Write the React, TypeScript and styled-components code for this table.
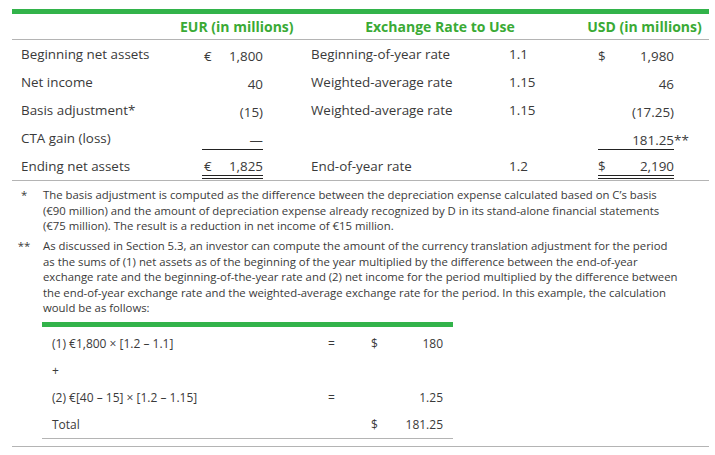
import React from "react";
import styled, { createGlobalStyle } from "styled-components";

const GREEN = "#32b34a";
const HEAD_GREEN = "#3aaa35";
const TEXT = "#3a3a3a";
const RULE = "#b4b4b4";

const Global = createGlobalStyle`
  html, body { margin: 0; padding: 0; background: #fff; }
  body { font-family: "Open Sans", "Noto Sans", sans-serif; color: ${TEXT}; }
`;

const Page = styled.div`
  width: 697px;
  padding: 9px 6px 0 12px;
`;

const MainTable = styled.div`
  display: grid;
  grid-template-columns: 168px 111px 209px 80px 129px;
  border-top: 5px solid ${GREEN};
  border-bottom: 1.5px solid ${RULE};
  font-size: 13.4px;
`;

const HeadCell = styled.div<{ $span?: number; $shift?: number }>`
  grid-column: span ${(p) => p.$span ?? 1};
  height: 25px;
  line-height: 25px;
  border-bottom: 1.5px solid ${RULE};
  text-align: center;
  font-weight: 700;
  font-size: 14px;
  color: ${HEAD_GREEN};
  padding-left: ${(p) => p.$shift ?? 0}px;
  white-space: nowrap;
`;

const Cell = styled.div<{ $pad?: number }>`
  height: 28px;
  line-height: 28px;
  padding-left: ${(p) => p.$pad ?? 0}px;
  white-space: nowrap;
  display: flex;
  align-items: center;
`;

const Amount = styled.div<{ $width: number; $rule?: "single" | "double" }>`
  width: ${(p) => p.$width}px;
  display: flex;
  justify-content: space-between;
  line-height: 18px;
  height: 18px;
  margin-top: 4px;
  box-sizing: content-box;
  border-bottom: ${(p) =>
    p.$rule === "single"
      ? `1px solid #222`
      : p.$rule === "double"
      ? `4px double #222`
      : `1px solid transparent`};
`;

const Sym = styled.span`
  padding-left: 2px;
`;

const Stars = styled.span`
  line-height: 18px;
  height: 18px;
  margin-top: 4px;
  border-bottom: 1px solid transparent;
`;

const Notes = styled.div`
  margin-top: 6px;
  display: flex;
  flex-direction: column;
  gap: 4.5px;
  font-size: 11.35px;
  line-height: 15.5px;
`;

const Note = styled.div`
  display: grid;
  grid-template-columns: 24px 1fr;
  column-gap: 7px;
`;

const Marker = styled.div`
  text-align: center;
`;

const Line = styled.div`
  white-space: nowrap;
`;

const CalcTable = styled.div`
  width: 411px;
  margin: 6px 0 0 30px;
  border-top: 5px solid ${GREEN};
  border-bottom: 1.5px solid ${RULE};
  padding-top: 3px;
  display: grid;
  grid-template-columns: 278px 23px 27px 20px 53px;
  font-size: 12px;
`;

const CalcCell = styled.div<{ $align?: "left" | "center" | "right"; $pad?: number }>`
  height: 27px;
  line-height: 27px;
  text-align: ${(p) => p.$align ?? "left"};
  padding-left: ${(p) => p.$pad ?? 0}px;
  white-space: nowrap;
`;

const BottomRule = styled.div`
  margin-top: 7px;
  border-top: 1.5px solid ${RULE};
`;

type Row = {
  label: string;
  eurSym?: string;
  eur: string;
  eurRule?: "single" | "double";
  rateLabel: string;
  rate: string;
  usdSym?: string;
  usd: string;
  usdRule?: "single" | "double";
  stars?: string;
};

const rows: Row[] = [
  { label: "Beginning net assets", eurSym: "€", eur: "1,800", rateLabel: "Beginning-of-year rate", rate: "1.1", usdSym: "$", usd: "1,980" },
  { label: "Net income", eur: "40", rateLabel: "Weighted-average rate", rate: "1.15", usd: "46" },
  { label: "Basis adjustment*", eur: "(15)", rateLabel: "Weighted-average rate", rate: "1.15", usd: "(17.25)" },
  { label: "CTA gain (loss)", eur: "—", eurRule: "single", rateLabel: "", rate: "", usd: "181.25", usdRule: "single", stars: "**" },
  { label: "Ending net assets", eurSym: "€", eur: "1,825", eurRule: "double", rateLabel: "End-of-year rate", rate: "1.2", usdSym: "$", usd: "2,190", usdRule: "double" },
];

const note1 = [
  "The basis adjustment is computed as the difference between the depreciation expense calculated based on C’s basis",
  "(€90 million) and the amount of depreciation expense already recognized by D in its stand-alone financial statements",
  "(€75 million). The result is a reduction in net income of €15 million.",
];

const note2 = [
  "As discussed in Section 5.3, an investor can compute the amount of the currency translation adjustment for the period",
  "as the sums of (1) net assets as of the beginning of the year multiplied by the difference between the end-of-year",
  "exchange rate and the beginning-of-the-year rate and (2) net income for the period multiplied by the difference between",
  "the end-of-year exchange rate and the weighted-average exchange rate for the period. In this example, the calculation",
  "would be as follows:",
];

const calc = [
  { label: "(1) €1,800 × [1.2 – 1.1]", eq: "=", sym: "$", val: "180" },
  { label: "+", eq: "", sym: "", val: "" },
  { label: "(2) €[40 – 15] × [1.2 – 1.15]", eq: "=", sym: "", val: "1.25" },
  { label: "Total", eq: "", sym: "$", val: "181.25" },
];

export default function App() {
  return (
    <>
      <Global />
      <Page>
        <MainTable>
          <HeadCell />
          <HeadCell>EUR (in millions)</HeadCell>
          <HeadCell $span={2} $shift={9}>Exchange Rate to Use</HeadCell>
          <HeadCell>USD (in millions)</HeadCell>
          {rows.map((r, i) => (
            <React.Fragment key={i}>
              <Cell $pad={9}>{r.label}</Cell>
              <Cell $pad={22}>
                <Amount $width={61} $rule={r.eurRule}>
                  <Sym>{r.eurSym ?? ""}</Sym>
                  <span>{r.eur}</span>
                </Amount>
              </Cell>
              <Cell $pad={20}>{r.rateLabel}</Cell>
              <Cell $pad={9}>{r.rate}</Cell>
              <Cell $pad={18}>
                <Amount $width={76} $rule={r.usdRule}>
                  <span>{r.usdSym ?? ""}</span>
                  <span>{r.usd}</span>
                </Amount>
                {r.stars && <Stars>{r.stars}</Stars>}
              </Cell>
            </React.Fragment>
          ))}
        </MainTable>

        <Notes>
          <Note>
            <Marker>*</Marker>
            <div>
              {note1.map((l, i) => (
                <Line key={i}>{l}</Line>
              ))}
            </div>
          </Note>
          <Note>
            <Marker>**</Marker>
            <div>
              {note2.map((l, i) => (
                <Line key={i}>{l}</Line>
              ))}
            </div>
          </Note>
        </Notes>

        <CalcTable>
          {calc.map((c, i) => (
            <React.Fragment key={i}>
              <CalcCell $pad={10}>{c.label}</CalcCell>
              <CalcCell $align="center">{c.eq}</CalcCell>
              <CalcCell />
              <CalcCell $pad={1}>{c.sym}</CalcCell>
              <CalcCell $align="right">{c.val}</CalcCell>
            </React.Fragment>
          ))}
        </CalcTable>

        <BottomRule />
      </Page>
    </>
  );
}
